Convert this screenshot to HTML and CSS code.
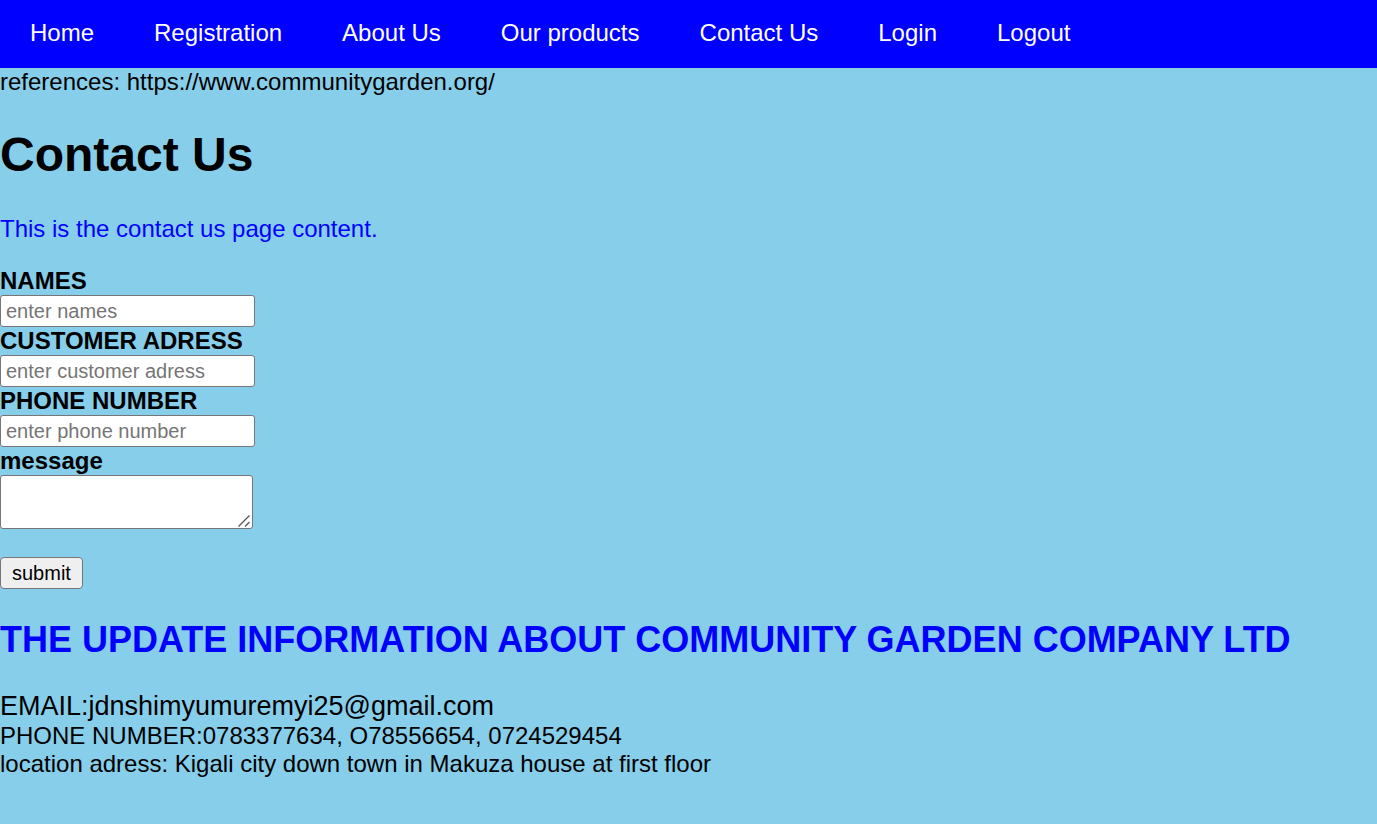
FILE: index.html
```html
<!DOCTYPE html>
<html lang="en">
<head>
<meta charset="utf-8">
<title>Contact Us</title>
<link rel="stylesheet" href="styles.css">
</head>
<body>
<nav class="navbar">
  <ul class="nav-list">
    <li><a class="nav-link" href="#home">Home</a></li>
    <li><a class="nav-link" href="#registration">Registration</a></li>
    <li><a class="nav-link" href="#about">About Us</a></li>
    <li><a class="nav-link" href="#products">Our products</a></li>
    <li><a class="nav-link" href="#contact">Contact Us</a></li>
    <li><a class="nav-link" href="#login">Login</a></li>
    <li><a class="nav-link" href="#logout">Logout</a></li>
  </ul>
</nav>
<main>
  <div class="references">references: https://www.communitygarden.org/</div>
  <h1 class="title">Contact Us</h1>
  <p class="intro">This is the contact us page content.</p>
  <form class="contact-form">
    <label class="label" for="names">NAMES</label>
    <input class="field" id="names" type="text" placeholder="enter names">
    <label class="label" for="address">CUSTOMER ADRESS</label>
    <input class="field" id="address" type="text" placeholder="enter customer adress">
    <label class="label" for="phone">PHONE NUMBER</label>
    <input class="field" id="phone" type="text" placeholder="enter phone number">
    <label class="label" for="message">message</label>
    <textarea class="message" id="message"></textarea>
    <button class="submit" type="submit">submit</button>
  </form>
</main>
<footer>
  <h2 class="company">THE UPDATE INFORMATION ABOUT COMMUNITY GARDEN COMPANY LTD</h2>
  <div class="email">EMAIL:jdnshimyumuremyi25@gmail.com</div>
  <div>PHONE NUMBER:0783377634, O78556654, 0724529454</div>
  <div>location adress: Kigali city down town in Makuza house at first floor</div>
</footer>
</body>
</html>
```

FILE: styles.css
```css
* {
  box-sizing: border-box;
}

body {
  margin: 0;
  background: skyblue;
  color: #000;
  font: 24px/28px "Liberation Sans", Arial, sans-serif;
}

.navbar {
  background: #00f;
}

.nav-list {
  display: flex;
  flex-wrap: wrap;
  margin: 0;
  padding: 0;
  list-style: none;
}

.nav-link {
  display: block;
  padding: 19px 30px 21px;
  color: #fff;
  text-decoration: none;
}

.title {
  margin: 32px 0 34px;
  font-size: 48px;
  line-height: 53px;
}

.intro {
  margin: 0 0 24px;
  color: #00f;
}

.contact-form {
  display: flex;
  flex-direction: column;
  align-items: flex-start;
}

.label {
  font-weight: bold;
}

.field,
.message {
  border: 1px solid #767676;
  border-radius: 3px;
  background: #fff;
  font: 20px/24px "Liberation Sans", Arial, sans-serif;
}

.field {
  width: 255px;
  height: 32px;
  padding: 2px 5px;
}

.field::placeholder {
  color: #757575;
}

.message {
  width: 253px;
  height: 54px;
  padding: 3px;
}

.message::-webkit-resizer {
  background: url("data:image/svg+xml,%3Csvg xmlns='http://www.w3.org/2000/svg' width='15' height='15' viewBox='0 0 15 15'%3E%3Cpath d='M1.5 13.5L12.5 2.5M8 13.5L12.5 9' fill='none' stroke='%23555' stroke-width='1.3'/%3E%3C/svg%3E") no-repeat right bottom;
}

.submit {
  height: 32px;
  margin-top: 28px;
  padding: 2px 11px;
  border: 1px solid #767676;
  border-radius: 4px;
  background: #efefef;
  color: #000;
  font: 20px/24px "Liberation Sans", Arial, sans-serif;
}

.company {
  margin: 30px 0;
  color: #00f;
  font-size: 36px;
  line-height: 42px;
}

.email {
  font-size: 27px;
  line-height: 31px;
}
```
